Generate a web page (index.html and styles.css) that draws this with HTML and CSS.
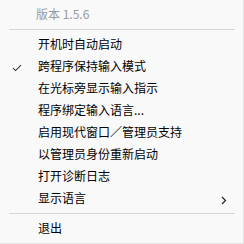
FILE: index.html
```html
<!DOCTYPE html>
<html lang="zh-CN">
<head>
    <meta charset="UTF-8">
    <title>托盘菜单</title>
    <link rel="stylesheet" href="styles.css">
</head>
<body>
    <div class="menu">
        <div class="menu-item version">版本 1.5.6</div>
        <div class="separator"></div>
        <div class="menu-item">开机时自动启动</div>
        <div class="menu-item checked">
            <svg class="check" width="10" height="8" viewBox="0 0 10 8">
                <path d="M1 4.2 L3.6 6.6 L9 1.2" fill="none" stroke="#333" stroke-width="1.1"/>
            </svg>
            跨程序保持输入模式
        </div>
        <div class="menu-item">在光标旁显示输入指示</div>
        <div class="menu-item">程序绑定输入语言...</div>
        <div class="menu-item">启用现代窗口／管理员支持</div>
        <div class="menu-item">以管理员身份重新启动</div>
        <div class="menu-item">打开诊断日志</div>
        <div class="menu-item submenu">
            显示语言
            <svg class="arrow" width="6" height="9" viewBox="0 0 6 9">
                <path d="M1 1 L4.5 4.5 L1 8" fill="none" stroke="#222" stroke-width="1.2"/>
            </svg>
        </div>
        <div class="separator"></div>
        <div class="menu-item">退出</div>
    </div>
</body>
</html>
```

FILE: styles.css
```css
body {
    margin: 0;
    padding: 0;
    background-color: #f9f9f9;
    font-family: "Noto Sans CJK SC", "Noto Sans", sans-serif;
    font-size: 12px;
    color: #000;
}

.menu {
    width: 244px;
    height: 244px;
    box-sizing: border-box;
    padding-top: 3px;
    background-color: #f9f9f9;
    border-right: 1px solid #e4e4e4;
    border-bottom: 1px solid #e4e4e4;
}

.menu-item {
    position: relative;
    height: 22px;
    line-height: 22px;
    padding-left: 38px;
}

.version {
    padding-left: 36px;
    color: #9a9a9a;
}

.separator {
    height: 1px;
    margin: 4px 8px 3px 9px;
    background-color: #d6d6d6;
}

.submenu {
    margin-bottom: 1px;
}

.check {
    position: absolute;
    left: 12px;
    top: 9px;
}

.arrow {
    position: absolute;
    right: 16px;
    top: 9px;
}
```
